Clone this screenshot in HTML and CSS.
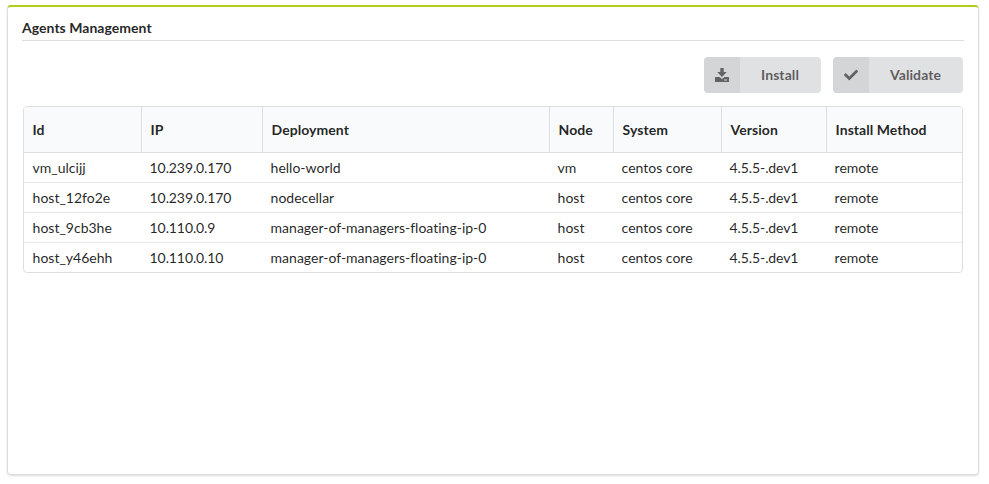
FILE: index.html
```html
<!DOCTYPE html>
<html lang="en">
<head>
<meta charset="utf-8">
<title>Agents Management</title>
<link rel="stylesheet" href="styles.css">
</head>
<body>
<main class="widget">
  <h5 class="title">Agents Management</h5>
  <div class="actions">
    <button class="btn install"><span class="icon"><svg width="14" height="14" viewBox="0 0 14 14"><path d="M5.300 0h3.400v4h3L7 9 2.300 4h3zM.5 9h4L7 11l2.500-2h4q.5 0 .5.500v4q0 .5-.5.500H.5q-.5 0-.5-.5v-4Q0 9 .5 9zM9 11.500v1h3v-1z" fill-rule="evenodd"/></svg></span><span class="label">Install</span></button>
    <button class="btn validate"><span class="icon"><svg width="14" height="14" viewBox="0 0 512 512"><path d="M173.898 439.404l-166.400-166.400c-9.997-9.997-9.997-26.206 0-36.204l36.203-36.204c9.997-9.998 26.207-9.998 36.204 0L192 312.690 432.095 72.596c9.997-9.997 26.207-9.997 36.204 0l36.203 36.204c9.997 9.997 9.997 26.206 0 36.204l-294.400 294.401c-9.998 9.997-26.207 9.997-36.204-.001z"/></svg></span><span class="label">Validate</span></button>
  </div>
  <table class="grid">
    <colgroup><col class="c1"><col class="c2"><col class="c3"><col class="c4"><col class="c5"><col class="c6"><col class="c7"></colgroup>
    <thead><tr><th>Id</th><th>IP</th><th>Deployment</th><th>Node</th><th>System</th><th>Version</th><th>Install Method</th></tr></thead>
    <tbody>
      <tr><td>vm_ulcijj</td><td class="num">10.239.0.170</td><td>hello-world</td><td>vm</td><td>centos core</td><td class="num">4.5.5-.dev1</td><td>remote</td></tr>
      <tr><td>host_12fo2e</td><td class="num">10.239.0.170</td><td>nodecellar</td><td>host</td><td>centos core</td><td class="num">4.5.5-.dev1</td><td>remote</td></tr>
      <tr><td>host_9cb3he</td><td class="num">10.110.0.9</td><td>manager-of-managers-floating-ip-0</td><td>host</td><td>centos core</td><td class="num">4.5.5-.dev1</td><td>remote</td></tr>
      <tr><td>host_y46ehh</td><td class="num">10.110.0.10</td><td>manager-of-managers-floating-ip-0</td><td>host</td><td>centos core</td><td class="num">4.5.5-.dev1</td><td>remote</td></tr>
    </tbody>
  </table>
</main>
</body>
</html>
```
FILE: styles.css
```css
* { box-sizing: border-box; }
body {
  margin: 0;
  padding: 5px 10px 9px 7px;
  height: 484px;
  background: #fff;
  font-family: Lato, "Liberation Sans", sans-serif;
  font-size: 14px;
  font-variant-ligatures: no-common-ligatures;
  color: rgba(0, 0, 0, .87);
}
.widget {
  height: 470px;
  padding: 14px 14px 0;
  border: 1px solid #dcdddd;
  border-top: 2px solid #b5cc18;
  border-radius: 4px;
  box-shadow: 0 1px 2px rgba(34, 36, 38, .15);
}
.title {
  margin: 0;
  height: 20px;
  border-bottom: 1px solid #dededf;
  font-size: 14px;
  line-height: 14px;
  font-weight: 700;
  letter-spacing: .03px;
}
.actions {
  display: flex;
  justify-content: flex-end;
  gap: 12px;
  margin: 16px 1px 13px 0;
}
.btn {
  display: flex;
  height: 36px;
  padding: 0;
  border: 0;
  border-radius: 4px;
  overflow: hidden;
  background: #e0e1e2;
  color: rgba(0, 0, 0, .6);
  font: 700 14px/36px Lato, "Liberation Sans", sans-serif;
  letter-spacing: .08px;
}
.install { width: 117px; }
.validate { width: 130px; }
.icon {
  display: flex;
  align-items: center;
  justify-content: center;
  width: 36px;
  height: 36px;
  background: rgba(0, 0, 0, .05);
}
.icon svg { fill: #626364; }
.label { flex: 1; padding-right: 1px; text-align: center; }
.grid {
  width: 940px;
  margin-left: 1px;
  table-layout: fixed;
  border: 1px solid #dededf;
  border-radius: 4px;
  border-collapse: separate;
  border-spacing: 0;
  overflow: hidden;
}
.c1 { width: 117px; }
.c2 { width: 121px; }
.c3 { width: 287px; }
.c4 { width: 64px; }
.c5 { width: 108px; }
.c6 { width: 105px; }
.grid th {
  height: 46px;
  padding: 0 8px 0 8.6px;
  border-left: 1px solid #dededf;
  border-bottom: 1px solid #dededf;
  background: #f9fafb;
  text-align: left;
  font-weight: 700;
  letter-spacing: .05px;
}
.grid td {
  height: 30px;
  padding: 0 8px 0 8.600px;
  border-top: 1px solid #e7e8e8;
}
.grid .num { letter-spacing: -.1px; }
.grid th:first-child { border-left: 0; }
.grid tbody tr:first-child td { height: 29px; border-top: 0; }
```
